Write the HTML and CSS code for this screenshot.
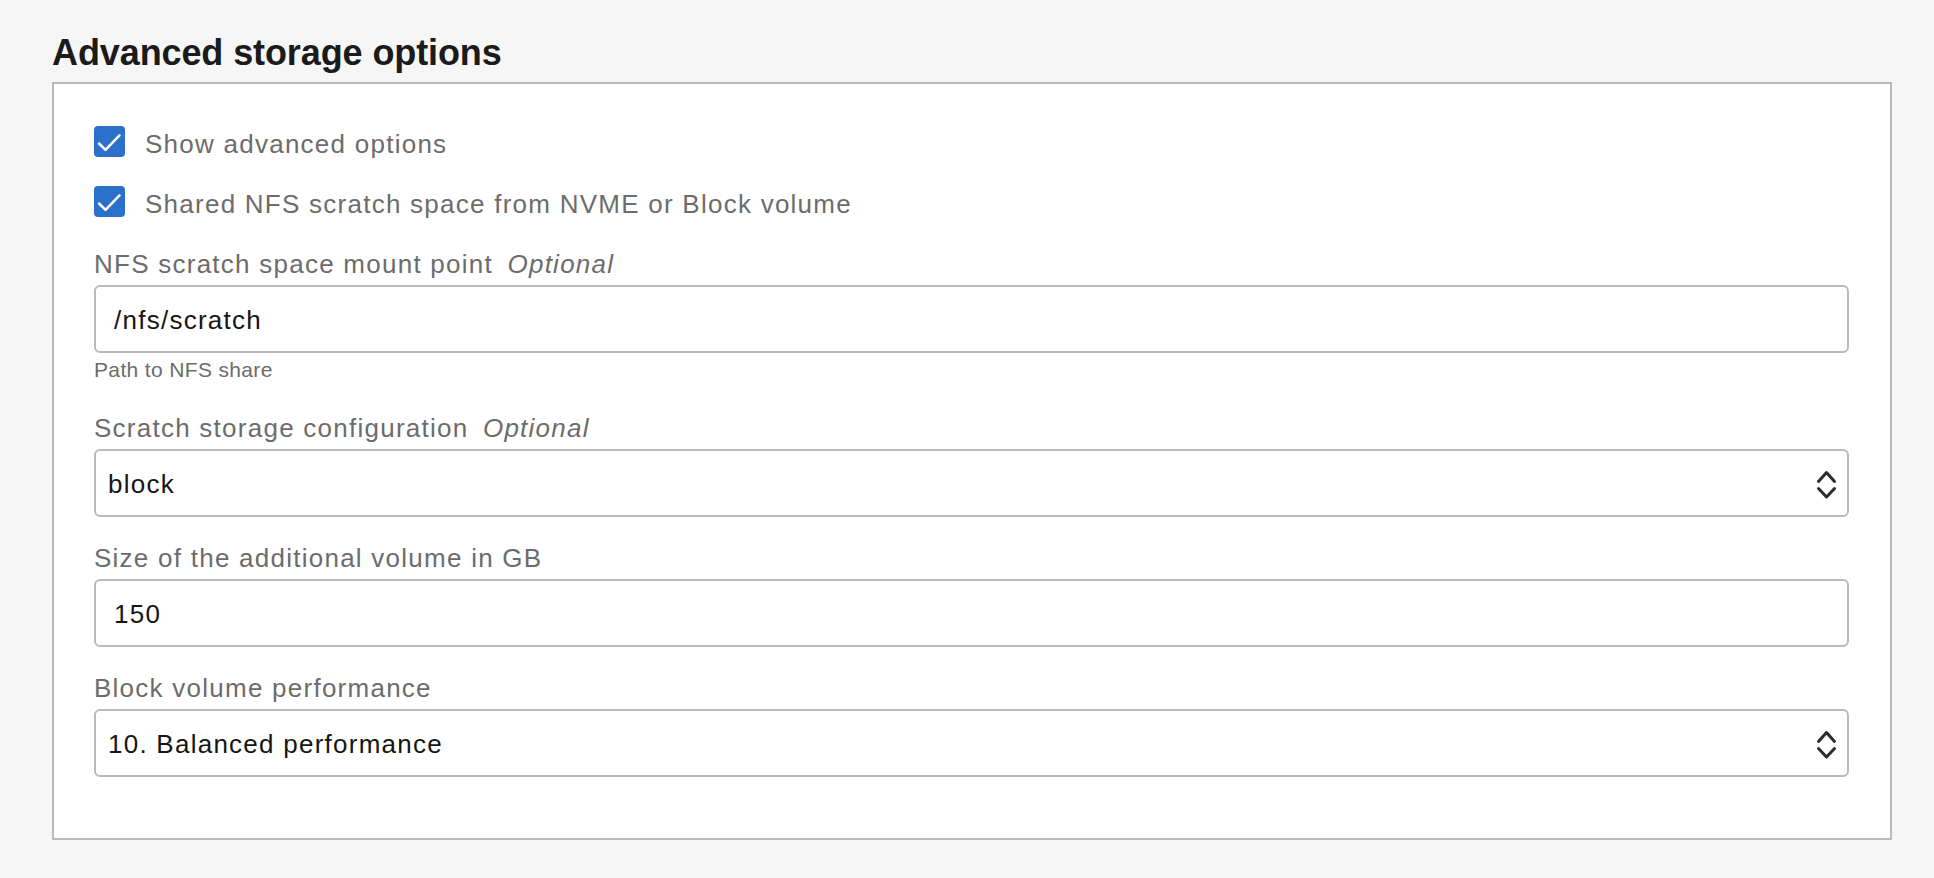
FILE: index.html
```html
<!DOCTYPE html>
<html lang="en">
<head>
<meta charset="utf-8">
<title>Advanced storage options</title>
<link rel="stylesheet" href="styles.css">
</head>
<body>
<main class="page">
  <h2 class="section-title">Advanced storage options</h2>
  <section class="panel">
    <div class="check-list">
      <div class="check-row">
        <span class="checkbox"><svg viewBox="0 0 31 31" width="31" height="31"><path d="M5 17.5 L11.5 23.8 L25.5 9.3" fill="none" stroke="#fff" stroke-width="2.5" stroke-linecap="round" stroke-linejoin="round"/></svg></span>
        <span class="check-text">Show advanced options</span>
      </div>
      <div class="check-row">
        <span class="checkbox"><svg viewBox="0 0 31 31" width="31" height="31"><path d="M5 17.5 L11.5 23.8 L25.5 9.3" fill="none" stroke="#fff" stroke-width="2.5" stroke-linecap="round" stroke-linejoin="round"/></svg></span>
        <span class="check-text">Shared NFS scratch space from NVME or Block volume</span>
      </div>
    </div>

    <div class="field">
      <div class="field-label">NFS scratch space mount point <em class="optional">Optional</em></div>
      <div class="control text-input"><span class="value">/nfs/scratch</span></div>
      <div class="helper">Path to NFS share</div>
    </div>

    <div class="field">
      <div class="field-label">Scratch storage configuration <em class="optional">Optional</em></div>
      <div class="control select"><span class="value">block</span>
        <svg class="chevrons" viewBox="0 0 21 31" width="21" height="31"><path d="M2.5 12.5 L10.5 3.5 L18.5 12.5 M2.5 19.5 L10.5 28 L18.5 19.5" fill="none" stroke="#2b2b2b" stroke-width="3" stroke-linecap="round" stroke-linejoin="round"/></svg>
      </div>
    </div>

    <div class="field">
      <div class="field-label">Size of the additional volume in GB</div>
      <div class="control text-input"><span class="value">150</span></div>
    </div>

    <div class="field">
      <div class="field-label">Block volume performance</div>
      <div class="control select"><span class="value">10. Balanced performance</span>
        <svg class="chevrons" viewBox="0 0 21 31" width="21" height="31"><path d="M2.5 12.5 L10.5 3.5 L18.5 12.5 M2.5 19.5 L10.5 28 L18.5 19.5" fill="none" stroke="#2b2b2b" stroke-width="3" stroke-linecap="round" stroke-linejoin="round"/></svg>
      </div>
    </div>
  </section>
</main>
</body>
</html>
```

FILE: styles.css
```css
html, body {
  margin: 0;
  padding: 0;
}

body {
  background: #f6f6f6;
  font-family: "Liberation Sans", Arial, Helvetica, sans-serif;
  color: #161513;
}

.page {
  padding: 31px 42px 38px 52px;
}

.section-title {
  margin: 0 0 7px 0;
  font-size: 36px;
  line-height: 44px;
  font-weight: 700;
  letter-spacing: -0.1px;
  color: #1b1b1b;
}

.panel {
  background: #ffffff;
  border: 2px solid #b7bbc0;
  padding: 42px 41px 61px 40px;
}

.check-list {
  display: flex;
  flex-direction: column;
  gap: 29px;
}

.check-row {
  display: flex;
  align-items: flex-start;
  gap: 20px;
  height: 31px;
}

.checkbox {
  width: 31px;
  height: 31px;
  border-radius: 4px;
  background: #2b70cb;
  display: flex;
  flex: none;
}

.check-text {
  font-size: 26px;
  line-height: 25px;
  margin-top: 6px;
  letter-spacing: 1.25px;
  color: #6c6c6c;
}

.field {
  margin-top: 25px;
}

.check-list + .field {
  margin-top: 31px;
}

.field-label {
  font-size: 26px;
  line-height: 32px;
  letter-spacing: 1.25px;
  color: #6c6c6c;
  margin-bottom: 5px;
}

.optional {
  font-style: italic;
  margin-left: 6px;
}

.control {
  height: 68px;
  box-sizing: border-box;
  border: 2px solid #b7bbc0;
  border-radius: 6px;
  background: #fff;
  display: flex;
  align-items: center;
  font-size: 26px;
  letter-spacing: 1.25px;
  color: #161513;
  padding-top: 2px;
}

.text-input {
  padding-left: 18px;
}

.select {
  padding-left: 12px;
  padding-right: 10px;
}

.select .chevrons {
  margin-left: auto;
  flex: none;
}

.helper {
  font-size: 21px;
  line-height: 28px;
  margin-top: 3px;
  padding-bottom: 3px;
  letter-spacing: 0.35px;
  color: #6c6c6c;
}
```
